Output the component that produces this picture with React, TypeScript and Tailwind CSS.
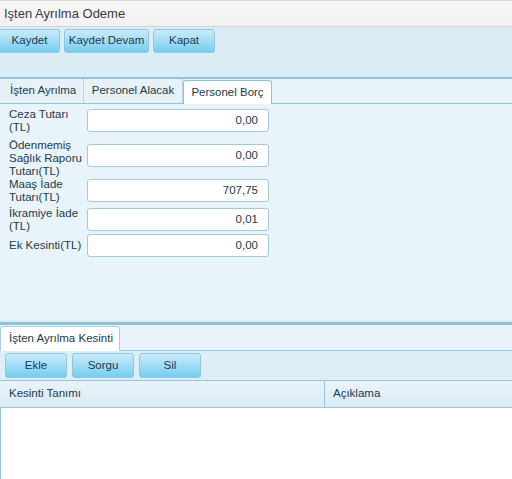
import React from "react";

const btn =
  "h-[24px] rounded-[3px] border border-[#93c6dc] bg-gradient-to-b from-[#c9ebfa] to-[#74cdf1] text-[11.5px] text-[#1d3a4c] flex items-center justify-center";

const rows: { label: string[]; value: string; h: string; lm: string; im: string }[] = [
  { label: ["Ceza Tutarı", "(TL)"], value: "0,00", h: "h-[32px]", lm: "mt-0", im: "mt-[1px]" },
  { label: ["Ödenmemiş", "Sağlık Raporu", "Tutarı(TL)"], value: "0,00", h: "h-[38px]", lm: "-mt-px", im: "mt-[4px]" },
  { label: ["Maaş İade", "Tutarı(TL)"], value: "707,75", h: "h-[29px]", lm: "mt-0", im: "mt-[1px]" },
  { label: ["İkramiye İade", "(TL)"], value: "0,01", h: "h-[27px]", lm: "mt-0", im: "mt-[1px]" },
  { label: ["Ek Kesinti(TL)"], value: "0,00", h: "h-[28px]", lm: "mt-[5px]", im: "mt-0" },
];

export default function App() {
  return (
    <div
      className="w-[512px] h-[479px] overflow-hidden bg-white flex flex-col"
      style={{ fontFamily: '"Liberation Sans", Arial, sans-serif' }}
    >
      {/* Title */}
      <div className="h-[27px] shrink-0 bg-gradient-to-b from-[#f8f8f8] to-[#f1f1f1] border-t border-[#dcdcdc] border-b border-b-[#d3d3d3] flex items-center pl-[4px] text-[13px] text-[#3a3a3a]">
        Işten Ayrılma Odeme
      </div>
      {/* Toolbar */}
      <div className="h-[52px] shrink-0 bg-[#daecf4] border-b-2 border-[#94c3d7] pt-[2px] flex gap-[4px] items-start">
        <div className={btn + " w-[60px] border-l-0 rounded-l-none"}>Kaydet</div>
        <div className={btn + " w-[85px]"}>Kaydet Devam</div>
        <div className={btn + " w-[62px]"}>Kapat</div>
      </div>
      {/* Tabs */}
      <div className="h-[25px] shrink-0 bg-[#e9f3fa] border-b border-[#86c4e0] flex items-end">
        <div className="h-[24px] w-[84px] border-r border-[#b5d6e4] flex items-center pl-[10px] text-[11.5px] text-[#1d3a4c] bg-[#e6f1f8]">
          İşten Ayrılma
        </div>
        <div className="h-[24px] w-[99px] border-r border-[#b5d6e4] flex items-center justify-center text-[11.5px] text-[#1d3a4c] bg-[#e6f1f8]">
          Personel Alacak
        </div>
        <div className="h-[24px] w-[89px] -mb-px bg-white border border-b-0 border-[#86c4e0] rounded-t-[3px] flex items-center justify-center text-[11.5px] text-[#1d3a4c]">
          Personel Borç
        </div>
      </div>
      {/* Form */}
      <div className="h-[216px] shrink-0 bg-[#e9f3fa] pt-[4px] flex flex-col">
        {rows.map((r, i) => (
          <div key={i} className={"flex items-start shrink-0 " + r.h}>
            <div className={"w-[87px] pl-[9px] text-[11.5px] leading-[13px] text-[#1d3a4c] " + r.lm}>
              {r.label.map((l, j) => (
                <div key={j}>{l}</div>
              ))}
            </div>
            <div
              className={
                "w-[182px] h-[23px] bg-white border border-[#a3c9da] rounded-[3px] flex items-center justify-end pr-[10px] text-[11.5px] text-[#1d3a4c] " +
                r.im
              }
            >
              {r.value}
            </div>
          </div>
        ))}
      </div>
      {/* Divider */}
      <div className="h-[2px] shrink-0 bg-[#dbecf4]" />
      <div className="h-[3px] shrink-0 bg-[#8fc2d7]" />
      {/* Tab 2 */}
      <div className="h-[26px] shrink-0 bg-[#e9f3fa] border-b border-[#93c6dc] flex items-end">
        <div className="h-[25px] w-[120px] -mb-px bg-white border border-b-0 border-[#a9d0e2] rounded-t-[3px] flex items-center pl-[8px] text-[11.5px] text-[#1d3a4c]">
          İşten Ayrılma Kesinti
        </div>
      </div>
      {/* Toolbar 2 */}
      <div className="h-[30px] shrink-0 bg-[#ddeef6] border-b border-[#93c6dc] flex items-center gap-[5px] pl-[5px]">
        <div className={btn + " w-[62px] h-[25px]"}>Ekle</div>
        <div className={btn + " w-[62px] h-[25px]"}>Sorgu</div>
        <div className={btn + " w-[62px] h-[25px]"}>Sil</div>
      </div>
      {/* Grid header */}
      <div className="h-[27px] shrink-0 bg-gradient-to-b from-[#e8f3f9] to-[#dbecf5] border-b border-[#93c6dc] flex text-[11.5px] text-[#1d3a4c]">
        <div className="w-[325px] border-r border-[#93c6dc] flex items-center pl-[9px]">Kesinti Tanımı</div>
        <div className="flex-1 flex items-center pl-[8px]">Açıklama</div>
      </div>
      {/* Grid body */}
      <div className="flex-1 bg-white border-l border-[#93c6dc]" />
    </div>
  );
}
